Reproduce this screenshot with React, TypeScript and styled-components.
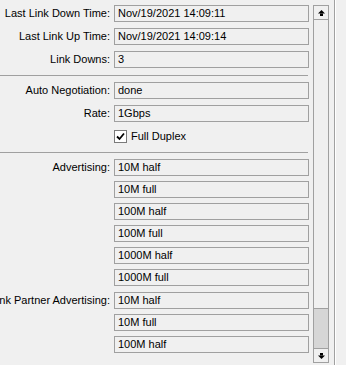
import styled, { createGlobalStyle } from "styled-components";

const GlobalStyle = createGlobalStyle`
    html, body {
        margin: 0;
        padding: 0;
        background: #f0f0f0;
        overflow: hidden;
    }
    body {
        font-family: "Liberation Sans", Arial, sans-serif;
        font-size: 11px;
        color: #000;
    }
`;

const Page = styled.div`
    display: flex;
    height: 365px;
    width: 346px;
    overflow: hidden;
`;

const Content = styled.div`
    width: 313px;
    flex: none;
    padding-top: 5px;
    box-sizing: border-box;
    display: flex;
    flex-direction: column;
`;

const Group = styled.div<{ $gap: number; $top?: number }>`
    display: flex;
    flex-direction: column;
    gap: ${(p) => p.$gap}px;
    margin-top: ${(p) => p.$top ?? 0}px;
`;

const Row = styled.div`
    display: grid;
    grid-template-columns: 110px 195px;
    column-gap: 4px;
    height: 17px;
`;

const Label = styled.div`
    display: flex;
    justify-content: flex-end;
    align-items: center;
    min-width: 0;
    white-space: nowrap;
    line-height: 17px;
`;

const Field = styled.div`
    box-sizing: border-box;
    height: 17px;
    border: 1px solid #a0a0a0;
    background: #f0f0f0;
    padding: 0 3px;
    line-height: 15px;
    white-space: nowrap;
    overflow: hidden;
`;

const CheckLine = styled.label`
    display: flex;
    align-items: center;
    gap: 4px;
    line-height: 17px;
`;

const Box = styled.span`
    width: 13px;
    height: 13px;
    box-sizing: border-box;
    border: 1px solid #7a7a7a;
    background: #fff;
    display: flex;
    align-items: center;
    justify-content: center;
`;

const Separator = styled.div`
    width: 308px;
    height: 1px;
    background: #a0a0a0;
    margin: 7px 0 6px;
`;

const ScrollBar = styled.div`
    width: 16px;
    flex: none;
    margin-top: 5px;
    height: 358px;
    display: flex;
    flex-direction: column;
`;

const ArrowButton = styled.div`
    height: 15px;
    box-sizing: border-box;
    border: 1px solid #a0a0a0;
    background: #f0f0f0;
    display: flex;
    align-items: center;
    justify-content: center;
`;

const Track = styled.div`
    flex: 1;
    box-sizing: border-box;
    border-left: 1px solid #a0a0a0;
    border-right: 1px solid #a0a0a0;
    display: flex;
    flex-direction: column;
    justify-content: flex-end;
`;

const Thumb = styled.div`
    height: 39px;
    background: #d6d6d6;
    border-top: 1px solid #a0a0a0;
`;

const Divider = styled.div`
    width: 1px;
    height: 100%;
    margin-left: 5px;
    background: #a0a0a0;
    border-right: 1px solid #fff;
`;

type FieldRow = { label?: string; value: string };

const top: FieldRow[] = [
    { label: "Last Link Down Time:", value: "Nov/19/2021 14:09:11" },
    { label: "Last Link Up Time:", value: "Nov/19/2021 14:09:14" },
    { label: "Link Downs:", value: "3" },
];

const advertising: FieldRow[] = [
    { label: "Advertising:", value: "10M half" },
    { value: "10M full" },
    { value: "100M half" },
    { value: "100M full" },
    { value: "1000M half" },
    { value: "1000M full" },
];

const partner: FieldRow[] = [
    { label: "Link Partner Advertising:", value: "10M half" },
    { value: "10M full" },
    { value: "100M half" },
];

function Rows({ rows }: { rows: FieldRow[] }) {
    return (
        <>
            {rows.map((r, i) => (
                <Row key={i}>
                    <Label>
                        <span>{r.label ?? ""}</span>
                    </Label>
                    <Field>{r.value}</Field>
                </Row>
            ))}
        </>
    );
}

const Arrow = ({ down }: { down?: boolean }) => (
    <svg width="7" height="6" viewBox="0 0 7 6" style={down ? { transform: "rotate(180deg)" } : undefined}>
        <polygon points="3.5,0 7,3.5 0,3.5" fill="#000" />
        <rect x="2" y="3.5" width="3" height="2.5" fill="#000" />
    </svg>
);

function App() {
    return (
        <>
            <GlobalStyle />
            <Page>
                <Content>
                    <Group $gap={6}>
                        <Rows rows={top} />
                    </Group>
                    <Separator />
                    <Group $gap={6}>
                        <Rows rows={[{ label: "Auto Negotiation:", value: "done" }, { label: "Rate:", value: "1Gbps" }]} />
                        <Row>
                            <Label />
                            <CheckLine>
                                <Box>
                                    <svg width="9" height="9" viewBox="0 0 9 9">
                                        <path d="M1 4.5 L3.5 7 L8 1.5" stroke="#000" strokeWidth="1.8" fill="none" />
                                    </svg>
                                </Box>
                                Full Duplex
                            </CheckLine>
                        </Row>
                    </Group>
                    <Separator />
                    <Group $gap={5}>
                        <Rows rows={advertising} />
                    </Group>
                    <Group $gap={5} $top={6}>
                        <Rows rows={partner} />
                    </Group>
                </Content>
                <ScrollBar>
                    <ArrowButton>
                        <Arrow />
                    </ArrowButton>
                    <Track>
                        <Thumb />
                    </Track>
                    <ArrowButton>
                        <Arrow down />
                    </ArrowButton>
                </ScrollBar>
                <Divider />
            </Page>
        </>
    );
}

export default App;
